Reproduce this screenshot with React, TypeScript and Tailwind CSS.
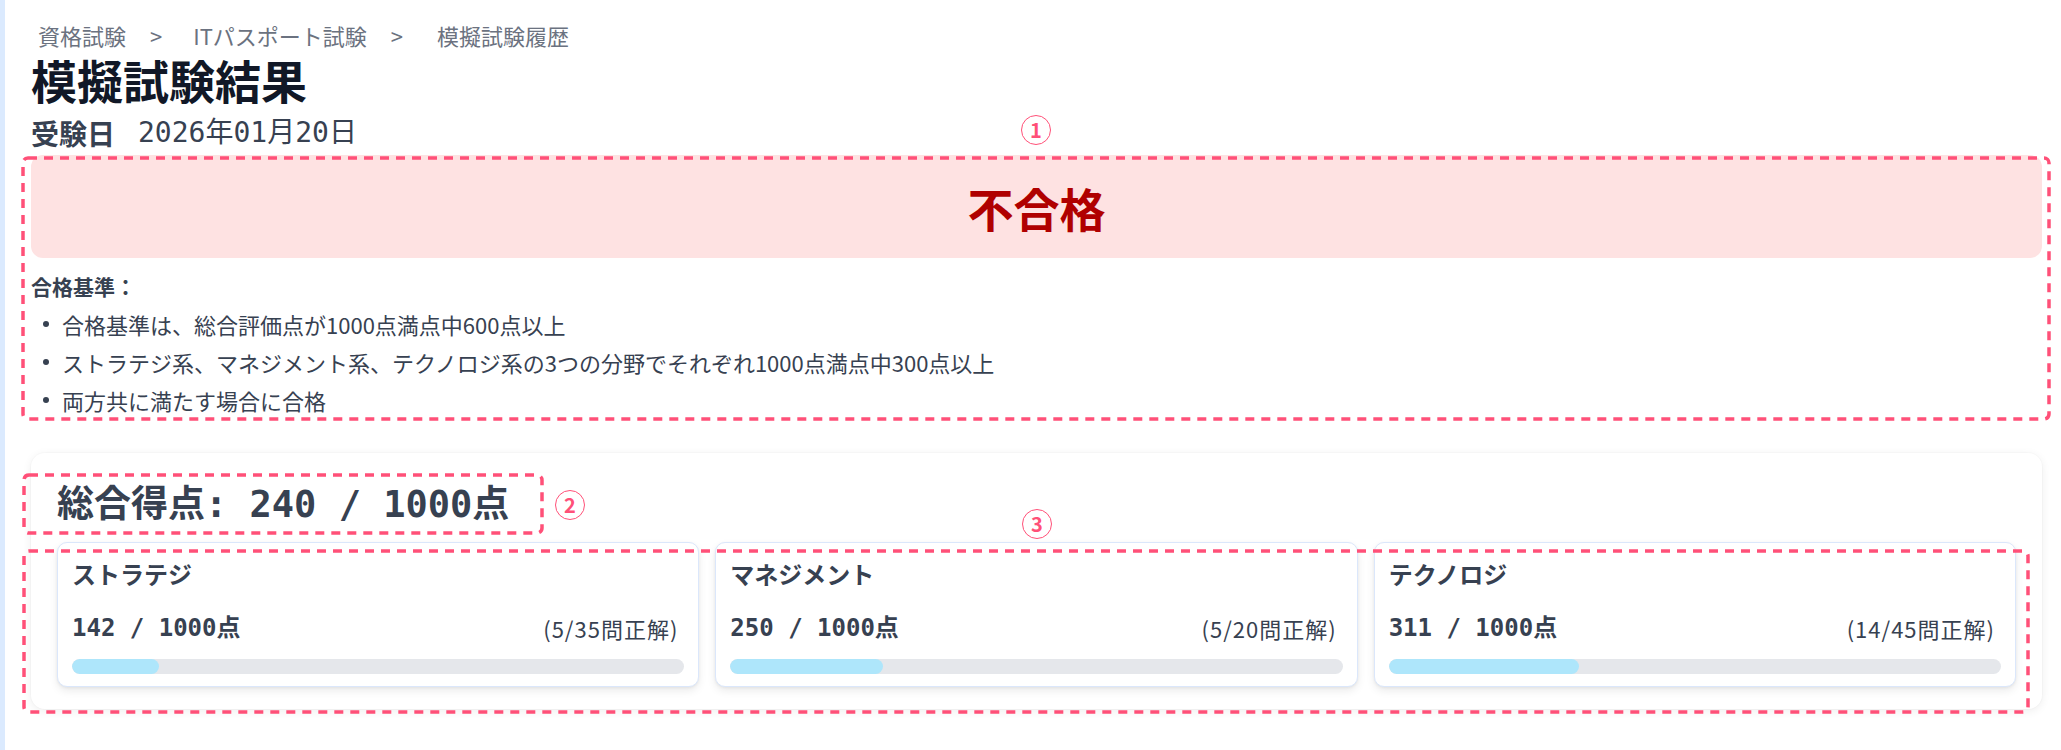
import React from "react";

const ANNO = "#ff5078";

function DashedBox({ className, w, h }: { className: string; w: number; h: number }) {
  return (
    <svg
      className={className}
      width={w}
      height={h}
      viewBox={`0 0 ${w} ${h}`}
      aria-hidden="true"
    >
      <rect
        x={2}
        y={2}
        width={w - 4}
        height={h - 4}
        rx={5}
        fill="none"
        stroke={ANNO}
        strokeWidth={3.5}
        strokeDasharray="9 7"
      />
    </svg>
  );
}

function Badge({ n, className }: { n: string; className: string }) {
  return (
    <div
      className={`${className} pointer-events-none flex h-[30px] w-[30px] items-center justify-center rounded-full border-[1.5px] border-[#ff5078] text-[20px] font-semibold leading-none text-[#ff5078]`}
    >
      {n}
    </div>
  );
}

type Area = { name: string; score: number; correct: number; total: number };

const areas: Area[] = [
  { name: "ストラテジ", score: 142, correct: 5, total: 35 },
  { name: "マネジメント", score: 250, correct: 5, total: 20 },
  { name: "テクノロジ", score: 311, correct: 14, total: 45 },
];

const sans = "font-['Noto_Sans_CJK_JP','Noto_Sans',sans-serif]";
const mono = "font-['DejaVu_Sans_Mono','Noto_Sans_CJK_JP',monospace]";

function AreaCard({ a }: { a: Area }) {
  return (
    <div className="rounded-[10px] border border-[#dbe7fb] bg-white px-[14px] pb-[12px] pt-[15px] shadow-[0_4px_8px_rgba(0,0,0,0.08),0_1px_3px_rgba(0,0,0,0.06)]">
      <div className={`${sans} text-[24px] font-semibold leading-[32px] text-[#374151]`}>{a.name}</div>
      <div className="mt-[22px] flex items-center justify-between">
        <span className={`${mono} text-[24px] font-bold leading-[32px] text-[#374151]`}>
          {a.score} / 1000点
        </span>
        <span className={`${sans} pr-[6px] text-[22px] leading-[32px] tracking-[1px] text-[#374151]`}>
          ({a.correct}/{a.total}問正解)
        </span>
      </div>
      <div className="mt-[15px] h-[15px] w-full overflow-hidden rounded-full bg-[#e5e7eb]">
        <div
          className="h-full rounded-full bg-[#aee6fb]"
          style={{ width: `${(a.score / 1000) * 100}%` }}
        />
      </div>
    </div>
  );
}

export default function App() {
  return (
    <div className={`${sans} flex min-h-screen bg-white`}>
      <div className="w-[5px] shrink-0 bg-[#dbeafe]" />
      <main className="flex-1 pl-[26px] pr-[19px] pt-[19px]">
        {/* breadcrumb */}
        <nav className="flex items-center pl-[7px] text-[22px] leading-[33px] text-[#6b7280]">
          <span>資格試験</span>
          <span className="pl-[24px] pr-[31px]">&gt;</span>
          <span>ITパスポート試験</span>
          <span className="pl-[24px] pr-[34px]">&gt;</span>
          <span>模擬試験履歴</span>
        </nav>

        <h1 className="text-[46px] font-bold leading-[55px] text-[#111827]">模擬試験結果</h1>

        <div className="mt-[8px] flex items-center text-[28px] leading-[36px] text-[#374151]">
          <span className="font-bold">受験日</span>
          <span className={`${mono} ml-[23px]`}>2026年01月20日</span>
        </div>

        {/* section 1 */}
        <section className="relative mt-[4px]">
          <div className="flex h-[103px] items-center justify-center rounded-[12px] bg-[#fee2e2]">
            <span className="text-[46px] font-bold leading-none text-[#b00000]">不合格</span>
          </div>
          <div className="mt-[12px] text-[21px] font-bold leading-[32px] text-[#374151]">合格基準：</div>
          <ul className="mt-[3px] text-[22px] text-[#374151]">
            {[
              "合格基準は、総合評価点が1000点満点中600点以上",
              "ストラテジ系、マネジメント系、テクノロジ系の3つの分野でそれぞれ1000点満点中300点以上",
              "両方共に満たす場合に合格",
            ].map((t) => (
              <li key={t} className="flex items-center leading-[38px]">
                <span className="ml-[12px] mr-[13px] h-[6px] w-[6px] shrink-0 rounded-full bg-[#374151]" />
                <span>{t}</span>
              </li>
            ))}
          </ul>

          <DashedBox className="pointer-events-none absolute left-[-10px] top-[1px]" w={2030} h={265} />
          <Badge n="1" className="absolute left-[990px] top-[-40px]" />
        </section>

        {/* section 2 */}
        <section className="relative mt-[34px] rounded-[14px] bg-white px-[26px] pb-[22px] pt-[24px] shadow-[0_2px_10px_rgba(0,0,0,0.07),0_0_0_1px_rgba(0,0,0,0.015)]">
          <div className={`${mono} text-[37px] font-bold leading-[55px] text-[#374151]`}>
            総合得点: 240 / 1000点
          </div>
          <div className="mt-[10px] grid grid-cols-3 gap-[16px]">
            {areas.map((a) => (
              <AreaCard key={a.name} a={a} />
            ))}
          </div>

          <DashedBox className="pointer-events-none absolute left-[-9px] top-[20px]" w={522} h={62} />
          <Badge n="2" className="absolute left-[524px] top-[37px]" />
          <DashedBox className="pointer-events-none absolute left-[-9px] top-[96px]" w={2008} h={165} />
          <Badge n="3" className="absolute left-[991px] top-[56px]" />
        </section>
      </main>
    </div>
  );
}
